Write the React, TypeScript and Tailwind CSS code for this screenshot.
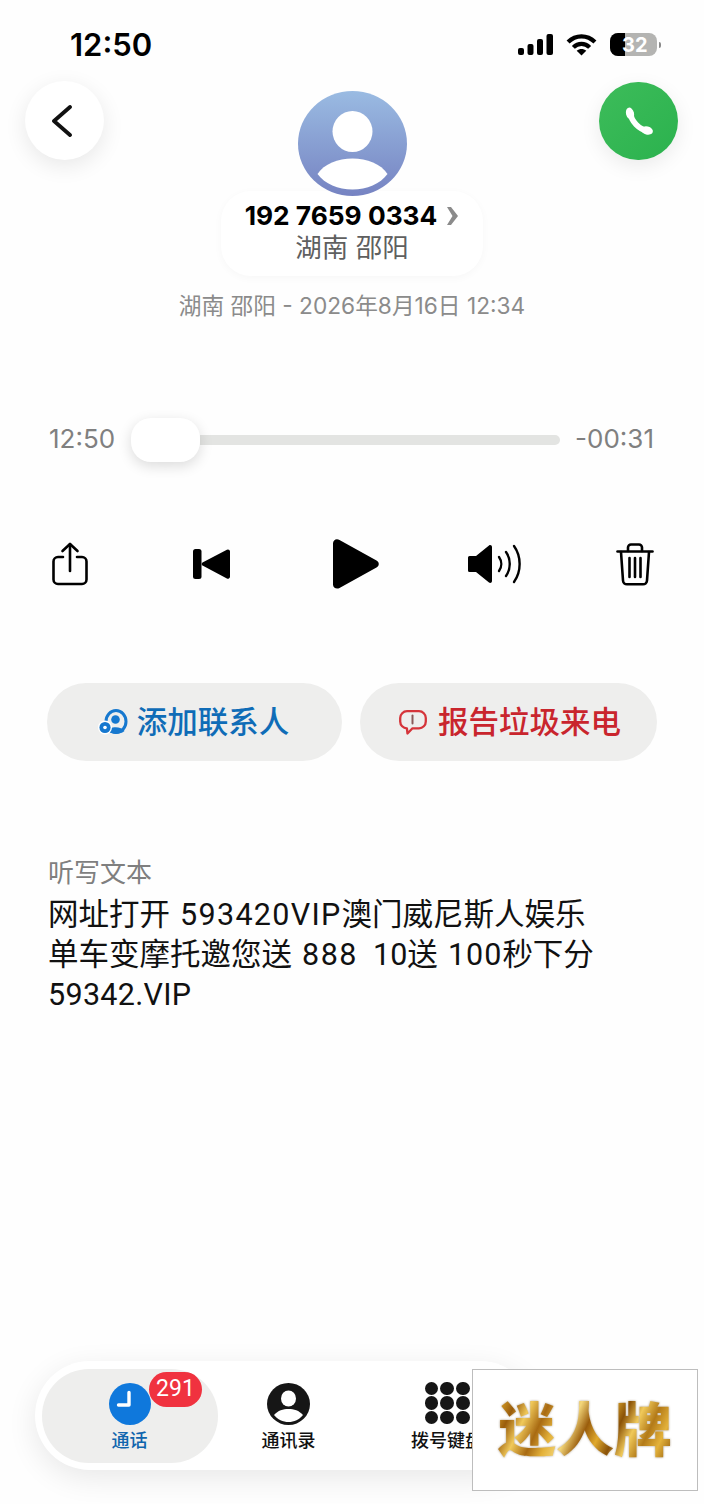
import React from "react";

const font = { fontFamily: '"Inter", "Noto Sans CJK SC", sans-serif' };
const textFont = { fontFamily: '"Roboto", "Noto Sans CJK SC", sans-serif' };

function Signal() {
  return (
    <svg width="35" height="21" viewBox="0 0 35 21" fill="#000">
      <rect x="0" y="14" width="6" height="7" rx="2" />
      <rect x="9.500" y="10" width="6" height="11" rx="2" />
      <rect x="19" y="5" width="6" height="16" rx="2" />
      <rect x="28.500" y="0" width="6.500" height="21" rx="2" />
    </svg>
  );
}

function Wifi() {
  return (
    <svg width="31" height="23" viewBox="0 0 32 24" fill="none" stroke="#000" strokeWidth="4.400">
      <path d="M2 9.500C10 1.500 22 1.500 30 9.500" />
      <path d="M7.500 15C12.500 10 19.500 10 24.500 15" />
      <path d="M16 23.500l-5-5c2.900-2.300 7.100-2.300 10 0z" fill="#000" stroke="none" />
    </svg>
  );
}

function Battery() {
  return (
    <div className="relative flex items-center">
      <div className="relative flex h-[23px] w-[47px] items-center overflow-hidden rounded-[8px] bg-[#b4b4b2] pl-[12px]">
        <div className="absolute inset-y-0 left-0 w-[15px] bg-black" />
        <span className="relative text-[20px] font-bold leading-none text-white">32</span>
      </div>
      <div className="ml-[2px] h-[6px] w-[2px] rounded-r bg-[#8a8a8a]" />
    </div>
  );
}

function Avatar() {
  return (
    <svg width="109" height="105" viewBox="0 0 109 105" className="relative z-10 block">
      <defs>
        <linearGradient id="av" x1="0" y1="0" x2="0" y2="1">
          <stop offset="0" stopColor="#9abbe2" />
          <stop offset="1" stopColor="#7683c2" />
        </linearGradient>
      </defs>
      <ellipse cx="54.500" cy="52.500" rx="54.500" ry="52.500" fill="url(#av)" />
      <ellipse cx="54.500" cy="40.500" rx="20" ry="20.500" fill="#fff" />
      <path d="M19.500 83C26 73 40 67.500 54.500 67.500S83 73 89.500 83C82 93 69 98.500 54.500 98.500S27 93 19.500 83Z" fill="#fff" />
    </svg>
  );
}

function Share() {
  return (
    <svg width="36" height="44" viewBox="0 0 36 44" fill="none" stroke="#000" strokeWidth="2.600" strokeLinecap="round" strokeLinejoin="round">
      <path d="M11 15H6a4.500 4.500 0 0 0-4.500 4.500v18A4.500 4.500 0 0 0 6 42h24a4.500 4.500 0 0 0 4.500-4.500v-18A4.500 4.500 0 0 0 30 15h-5" />
      <path d="M18 29V2" />
      <path d="M10.500 9L18 2l7.500 7" />
    </svg>
  );
}

function Prev() {
  return (
    <svg width="37" height="30" viewBox="0 0 37 30" fill="#000">
      <rect x="0" y="0" width="8.500" height="30" rx="2.500" />
      <path d="M35 .4a2 2 0 0 1 2 1.800v25.600a2 2 0 0 1-3.100 1.600L9.500 16.600a2 2 0 0 1 0-3.200L33.900.8a2 2 0 0 1 1.100-.4Z" />
    </svg>
  );
}

function Play() {
  return (
    <svg width="46" height="50" viewBox="0 0 46 50" fill="#000">
      <path d="M0 4.500C0 .8 3.500-1 6.500.9l37 20.500c3 1.700 3 5.500 0 7.200l-37 20.500C3.500 50.500 0 49 0 45.500Z" />
    </svg>
  );
}

function Speaker() {
  return (
    <svg width="55" height="40" viewBox="0 0 55 40" fill="none">
      <path d="M0 13.500a1.500 1.500 0 0 1 1.500-1.500H8L21 1.500c1.300-1 3-.1 3 1.500v34c0 1.600-1.700 2.500-3 1.500L8 28H1.500A1.500 1.500 0 0 1 0 26.500Z" fill="#000" />
      <g stroke="#000" strokeWidth="2.400" strokeLinecap="round">
        <path d="M31 13c3 4.200 3 9.800 0 14" />
        <path d="M38 8c5 7 5 17 0 24" />
        <path d="M46 2c7.500 10.500 7.500 25.500 0 36" />
      </g>
    </svg>
  );
}

function Trash() {
  return (
    <svg width="38" height="43" viewBox="0 0 38 43" fill="none" stroke="#000" strokeWidth="2.600" strokeLinecap="round" strokeLinejoin="round">
      <path d="M1.500 8.500h35" />
      <path d="M12 8V4.500a3 3 0 0 1 3-3h8a3 3 0 0 1 3 3V8" />
      <path d="M5 9l2 28.500a4 4 0 0 0 4 3.800h16a4 4 0 0 0 4-3.800L33 9" />
      <path d="M13.500 15v19M19 15v19M24.500 15v19" />
    </svg>
  );
}

function AddContact() {
  return (
    <svg width="30" height="26" viewBox="0 0 30 26">
      <ellipse cx="18" cy="12.500" rx="10" ry="11" fill="none" stroke="#1678cf" strokeWidth="3" />
      <circle cx="17.500" cy="10.500" r="4.300" fill="#1678cf" />
      <path d="M9.500 22c2-5 14-5 17 0-4 3.500-13 3.500-17 0Z" fill="#1678cf" />
      <circle cx="7" cy="18.500" r="7" fill="#fff" />
      <circle cx="7" cy="18.500" r="5.600" fill="#1678cf" />
      <circle cx="7" cy="18.500" r="1.800" fill="#fff" />
    </svg>
  );
}

function Report() {
  return (
    <svg width="28" height="25" viewBox="0 0 28 25" fill="none">
      <path d="M8 1.200h12a6.800 6.800 0 0 1 6.800 6.800v3.500a6.800 6.800 0 0 1-6.800 6.800h-6.500L8.500 23.500l-.6-5.200A6.800 6.800 0 0 1 1.200 11.500V8A6.800 6.800 0 0 1 8 1.200Z" stroke="#d5343a" strokeWidth="2.300" strokeLinejoin="round" />
      <path d="M13.500 5.500v8" stroke="#8a5a5a" strokeWidth="2" strokeLinecap="round" />
    </svg>
  );
}

function Keypad() {
  const dots = [0, 1, 2, 3, 4, 5, 6, 7, 8];
  return (
    <div className="-mt-[1px] mb-[1px] grid w-[45px] grid-cols-3 gap-x-[2px] gap-y-[1px]">
      {dots.map((d) => (
        <div key={d} className="h-[13.300px] w-[13.700px] rounded-full bg-[#161616]" />
      ))}
    </div>
  );
}

export default function App() {
  return (
    <div className="relative flex h-[1504px] w-[704px] flex-col overflow-hidden bg-[#fefefe] text-black" style={font}>
      {/* status bar */}
      <div className="flex h-[81px] items-start justify-between pl-[70px] pr-[43px] pt-[26px]">
        <span className="text-[31px] font-semibold leading-[38px]">12:50</span>
        <div className="flex items-center gap-[13px] pt-[7px]">
          <Signal />
          <Wifi />
          <Battery />
        </div>
      </div>

      {/* header */}
      <div className="flex items-start justify-between pl-[25px] pr-[26px]">
        <button className="flex h-[79px] w-[79px] items-center justify-center rounded-full bg-white pr-[6px] shadow-[0_6px_22px_rgba(0,0,0,0.09)]">
          <svg width="22" height="32" viewBox="0 0 22 32" fill="none" stroke="#111" strokeWidth="3.800" strokeLinecap="round" strokeLinejoin="round">
            <path d="M19 2 3 16l16 14" />
          </svg>
        </button>
        <div className="ml-[1px] flex flex-col items-center pt-[10px]">
          <Avatar />
          <div className="-mt-[5px] flex h-[85px] w-[262px] flex-col items-center rounded-[30px] bg-white pt-[9px] shadow-[0_2px_8px_rgba(0,0,0,0.03)]">
            <div className="flex items-center gap-[9px]">
              <span className="text-[26.300px] font-bold leading-[32px]">192 7659 0334</span>
              <svg width="13" height="20" viewBox="0 0 13 20" fill="#8b8b8b">
                <path d="M1 1h4l7 9-7 9H1l5.500-9Z" />
              </svg>
            </div>
            <span className="-mt-[2px] text-[26.500px] leading-[34px] text-[#5f5f5f]">湖南 邵阳</span>
          </div>
        </div>
        <button className="mt-[1px] flex h-[78px] w-[79px] items-center justify-center rounded-full bg-[linear-gradient(135deg,#3dbc5a,#2bb24e)] shadow-[0_6px_20px_rgba(0,0,0,0.08)]">
          <svg width="30" height="30" viewBox="0 0 30 30" fill="#fff">
            <path d="M6.500 7C7 15 15 23.500 24 25" fill="none" stroke="#fff" strokeWidth="5.600" strokeLinecap="round" />
            <ellipse cx="6" cy="7.500" rx="4" ry="6" transform="rotate(-14 6 7.500)" />
            <ellipse cx="23" cy="24.500" rx="6" ry="4" transform="rotate(14 23 24.500)" />
          </svg>
        </button>
      </div>

      <p className="mt-[15px] text-center text-[22.700px] leading-[30px] text-[#8b8b8b]">湖南 邵阳 - 2026年8月16日 12:34</p>

      {/* scrubber */}
      <div className="mt-[97px] flex h-[44px] items-center pl-[49px] pr-[50px]">
        <span className="-mt-[3px] w-[82px] text-[26px] text-[#808080]">12:50</span>
        <div className="flex flex-1 items-center">
          <div className="z-10 h-[44px] w-[69px] rounded-[20px] bg-white shadow-[0_4px_14px_rgba(0,0,0,0.14)]" />
          <div className="-mt-[1px] h-[10px] flex-1 rounded-r-full bg-[#e3e4e2]" />
        </div>
        <span className="-mt-[3px] ml-[15px] text-[26px] text-[#808080]">-00:31</span>
      </div>

      {/* transport */}
      <div className="mt-[77px] flex h-[50px] items-center pl-[52px]">
        <Share />
        <div className="ml-[105px]"><Prev /></div>
        <div className="ml-[103px]"><Play /></div>
        <div className="ml-[89px]"><Speaker /></div>
        <div className="ml-[93px]"><Trash /></div>
      </div>

      {/* actions */}
      <div className="mt-[94px] flex gap-[18px] pl-[47px] pr-[47px]">
        <button className="flex h-[78px] w-[295px] items-center justify-center gap-[9px] rounded-full bg-[#eeeeed] pr-[2px]">
          <AddContact />
          <span className="text-[30.500px] font-medium text-[#0f6cb7]">添加联系人</span>
        </button>
        <button className="flex h-[78px] w-[297px] items-center justify-center gap-[11px] rounded-full bg-[#eeeeed] pl-[3px]">
          <Report />
          <span className="text-[30.500px] font-medium text-[#c9252d]">报告垃圾来电</span>
        </button>
      </div>

      {/* transcript */}
      <div className="mt-[94px] pl-[48px]" style={textFont}>
        <p className="text-[26px] leading-[36px] text-[#7f7f7f]">听写文本</p>
        <p className="mt-[4px] text-[30.500px] leading-[40px] text-[#111] [word-spacing:2.500px]">
          网址打开 <span className="tracking-[1.300px]">593420VIP</span>澳门威尼斯人娱乐
          <br />
          单车变摩托邀您送 <span className="mr-[5px] tracking-[1.500px]">888</span> 10送 <span className="tracking-[1px]">100</span>秒下分
          <br />
          <span className="tracking-[0.300px]">59342.VIP</span>
        </p>
      </div>

      {/* tab bar */}
      <div className="mt-auto mb-[34px] ml-[35px] flex h-[109px] w-[500px] items-center rounded-full bg-white pl-[7px] shadow-[0_8px_30px_rgba(0,0,0,0.09)]">
        <div className="relative flex h-[94px] w-[176px] flex-col items-center justify-center rounded-full bg-[#eeeeed] pr-[1px] pt-[4px]">
          <div className="flex h-[42px] w-[42px] items-center justify-center rounded-full bg-[#0f78dc]">
            <svg width="42" height="42" viewBox="0 0 42 42" fill="none" stroke="#fff" strokeWidth="3.400" strokeLinecap="round" strokeLinejoin="round">
              <path d="M20 9.500V22H9.500" />
            </svg>
          </div>
          <span className="mt-[4px] text-[18px] font-medium leading-[24px] text-[#0f65ad]">通话</span>
          <div className="absolute left-[107px] top-[3px] flex h-[35px] w-[53px] items-center justify-center rounded-full bg-[#f0323f] text-[23px] text-white" style={textFont}>291</div>
        </div>
        <div className="flex w-[141px] flex-col items-center pt-[5px]">
          <svg width="43" height="42" viewBox="0 0 43 42">
            <ellipse cx="21.500" cy="21" rx="21.500" ry="21" fill="#161616" />
            <ellipse cx="21.500" cy="15.500" rx="7.500" ry="8" fill="#fff" />
            <path d="M7 32c4-4.500 9-6 14.500-6S32 27.500 36 32c-3.500 4.500-9 7-14.500 7S10.500 36.500 7 32Z" fill="#fff" />
          </svg>
          <span className="mt-[4px] text-[18px] font-medium leading-[24px] text-[#111]">通讯录</span>
        </div>
        <div className="flex w-[176px] flex-col items-center pt-[5px]">
          <Keypad />
          <span className="mt-[4px] text-[18px] font-medium leading-[24px] text-[#111]">拨号键盘</span>
        </div>
      </div>

      {/* watermark */}
      <div className="absolute left-[472px] top-[1369px] flex h-[122px] w-[226px] items-center justify-center border border-[#bdbdbd] bg-white">
        <span className="bg-[linear-gradient(115deg,#e0a92c_0%,#9a5d0c_9%,#f0c95a_17%,#a86a12_26%,#e4b23a_34%,#f3d67a_42%,#9a5d0c_50%,#e0a92c_58%,#8a5208_66%,#f0c95a_74%,#b37a18_82%,#e4b23a_90%,#8a5208_100%)] bg-clip-text text-[58px] font-black leading-none text-transparent drop-shadow-[0_0_1px_rgba(90,60,10,0.5)]">迷人牌</span>
      </div>
    </div>
  );
}
